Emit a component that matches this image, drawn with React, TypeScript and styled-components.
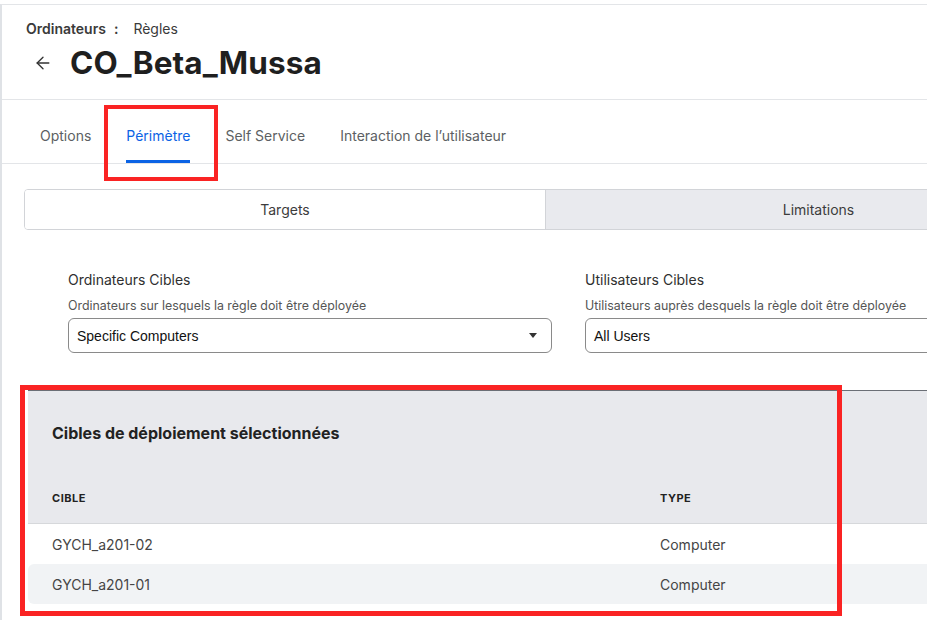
import React from 'react';
import styled, { createGlobalStyle } from 'styled-components';

const Global = createGlobalStyle`
  html, body { margin: 0; padding: 0; background: #fff; overflow: hidden; }
  body { font-family: Inter, "Noto Sans", sans-serif; -webkit-font-smoothing: antialiased; }
  * { box-sizing: border-box; }
`;

const Page = styled.div`
  position: relative;
  margin-top: 4px;
  width: 1120px;
  min-height: 620px;
  border-top: 1px solid #e3e5e8;
  border-left: 2px solid #dfe2e6;
`;

const Header = styled.header`
  padding: 16px 0 16px 0;
  border-bottom: 1px solid #e3e5e8;
`;

const Breadcrumb = styled.div`
  display: flex;
  align-items: center;
  padding-left: 24px;
  font-size: 14px;
  line-height: 16px;
  color: #3a3a3a;
`;

const Crumb = styled.span<{ $strong?: boolean }>`
  font-weight: ${(p) => (p.$strong ? 600 : 400)};
`;

const Sep = styled.span`
  font-weight: 600;
  margin: 0 15px 0 8px;
`;

const TitleRow = styled.div`
  display: flex;
  align-items: center;
  gap: 17px;
  padding-left: 31px;
  margin-top: 6px;
  height: 40px;
`;

const BackIcon = styled.svg`
  width: 20px;
  height: 20px;
  color: #333;
`;

const Title = styled.h1`
  margin: 0;
  font-size: 31.5px;
  line-height: 40px;
  font-weight: 700;
  color: #1f1f1f;
  letter-spacing: 0.1px;
`;

const Tabs = styled.nav`
  display: flex;
  gap: 35px;
  padding-left: 38px;
  height: 64px;
  border-bottom: 1px solid #e3e5e8;
`;

const Tab = styled.div<{ $active?: boolean }>`
  padding-top: 26px;
  font-size: 14px;
  line-height: 20px;
  color: ${(p) => (p.$active ? '#0b63e5' : '#5c5f63')};
  border-bottom: 3px solid ${(p) => (p.$active ? '#0b63e5' : 'transparent')};
`;

const Content = styled.div`
  padding: 25px 0 0 22px;
`;

const Segmented = styled.div`
  display: flex;
  width: 1068px;
  height: 41px;
  border: 1px solid #d2d4d8;
  border-radius: 4px;
  overflow: hidden;
`;

const Segment = styled.div<{ $active?: boolean; $width?: string }>`
  flex: ${(p) => (p.$width ? `0 0 ${p.$width}` : '1')};
  display: flex;
  align-items: center;
  justify-content: center;
  font-size: 14px;
  color: #3c3c3c;
  background: ${(p) => (p.$active ? '#fff' : '#e9eaee')};
  border-left: ${(p) => (p.$active ? 'none' : '1px solid #d2d4d8')};
`;

const Form = styled.div`
  display: grid;
  grid-template-columns: 484px 484px;
  gap: 33px;
  padding-left: 44px;
  margin-top: 40px;
`;

const Field = styled.div`
  display: flex;
  flex-direction: column;
`;

const Label = styled.div`
  font-size: 14px;
  line-height: 20px;
  color: #2f2f2f;
`;

const Hint = styled.div`
  margin-top: 8px;
  font-size: 12.4px;
  line-height: 16px;
  color: #555;
`;

const Select = styled.div`
  margin-top: 4px;
  height: 35px;
  display: flex;
  align-items: center;
  justify-content: space-between;
  padding: 0 14px 0 8px;
  border: 1px solid #8a8a8a;
  border-radius: 6px;
  font-family: "Liberation Sans", Arial, sans-serif;
  font-size: 14px;
  color: #111;
`;

const Caret = styled.svg`
  width: 8px;
  height: 5px;
`;

const Section = styled.section`
  margin: 37px 0 0 4px;
`;

const SectionHead = styled.div`
  background: #e8e9ed;
  border-top: 1px solid #6b6f76;
`;

const SectionTitle = styled.h2`
  margin: 0;
  padding: 32px 24px 35px;
  font-size: 16px;
  line-height: 20px;
  font-weight: 700;
  color: #222;
`;

const Grid = styled.div<{ $bg?: string; $round?: boolean }>`
  display: grid;
  grid-template-columns: 608px 1fr;
  padding: 0 24px;
  background: ${(p) => p.$bg || 'transparent'};
  border-radius: ${(p) => (p.$round ? '6px' : '0')};
`;

const HeadCell = styled.div`
  padding: 12px 0 17px;
  font-size: 11px;
  line-height: 16px;
  font-weight: 700;
  letter-spacing: 0.5px;
  text-transform: uppercase;
  color: #222;
`;

const HeadRow = styled(Grid)`
  border-bottom: 1px solid #d6d8db;
`;

const Cell = styled.div`
  height: 40px;
  display: flex;
  align-items: center;
  font-size: 14px;
  color: #454545;
`;

const Annotation = styled.div<{ $t: number; $l: number; $w: number; $h: number; $b: number }>`
  position: absolute;
  top: ${(p) => p.$t}px;
  left: ${(p) => p.$l}px;
  width: ${(p) => p.$w}px;
  height: ${(p) => p.$h}px;
  border: ${(p) => p.$b}px solid #fa2323;
  pointer-events: none;
`;

const rows = [
  { target: 'GYCH_a201-02', type: 'Computer' },
  { target: 'GYCH_a201-01', type: 'Computer' },
];

export default function App() {
  return (
    <>
      <Global />
      <Page>
        <Header>
          <Breadcrumb>
            <Crumb $strong>Ordinateurs</Crumb>
            <Sep>:</Sep>
            <Crumb>Règles</Crumb>
          </Breadcrumb>
          <TitleRow>
            <BackIcon viewBox="0 0 24 24" fill="none" stroke="currentColor" strokeWidth={1.6} strokeLinecap="round" strokeLinejoin="round">
              <path d="M12 19l-7-7 7-7" />
              <path d="M19 12H5" />
            </BackIcon>
            <Title>CO_Beta_Mussa</Title>
          </TitleRow>
        </Header>
        <Tabs>
          <Tab>Options</Tab>
          <Tab $active>Périmètre</Tab>
          <Tab>Self Service</Tab>
          <Tab>Interaction de l’utilisateur</Tab>
        </Tabs>
        <Content>
          <Segmented>
            <Segment $active $width="520px">Targets</Segment>
            <Segment>Limitations</Segment>
          </Segmented>
          <Form>
            <Field>
              <Label>Ordinateurs Cibles</Label>
              <Hint>Ordinateurs sur lesquels la règle doit être déployée</Hint>
              <Select>
                <span>Specific Computers</span>
                <Caret viewBox="0 0 8 5">
                  <path d="M0 0h8L4 5z" fill="#333" />
                </Caret>
              </Select>
            </Field>
            <Field>
              <Label>Utilisateurs Cibles</Label>
              <Hint>Utilisateurs auprès desquels la règle doit être déployée</Hint>
              <Select>
                <span>All Users</span>
                <Caret viewBox="0 0 8 5">
                  <path d="M0 0h8L4 5z" fill="#333" />
                </Caret>
              </Select>
            </Field>
          </Form>
          <Section>
            <SectionHead>
              <SectionTitle>Cibles de déploiement sélectionnées</SectionTitle>
              <HeadRow>
                <HeadCell>Cible</HeadCell>
                <HeadCell>Type</HeadCell>
              </HeadRow>
            </SectionHead>
            {rows.map((r, i) => (
              <Grid key={r.target} $bg={i % 2 === 1 ? '#f1f3f5' : '#fff'} $round={i % 2 === 1}>
                <Cell>{r.target}</Cell>
                <Cell>{r.type}</Cell>
              </Grid>
            ))}
          </Section>
        </Content>
        <Annotation $t={100} $l={102} $w={114} $h={76} $b={4} />
        <Annotation $t={380} $l={18} $w={822} $h={231} $b={5} />
      </Page>
    </>
  );
}
